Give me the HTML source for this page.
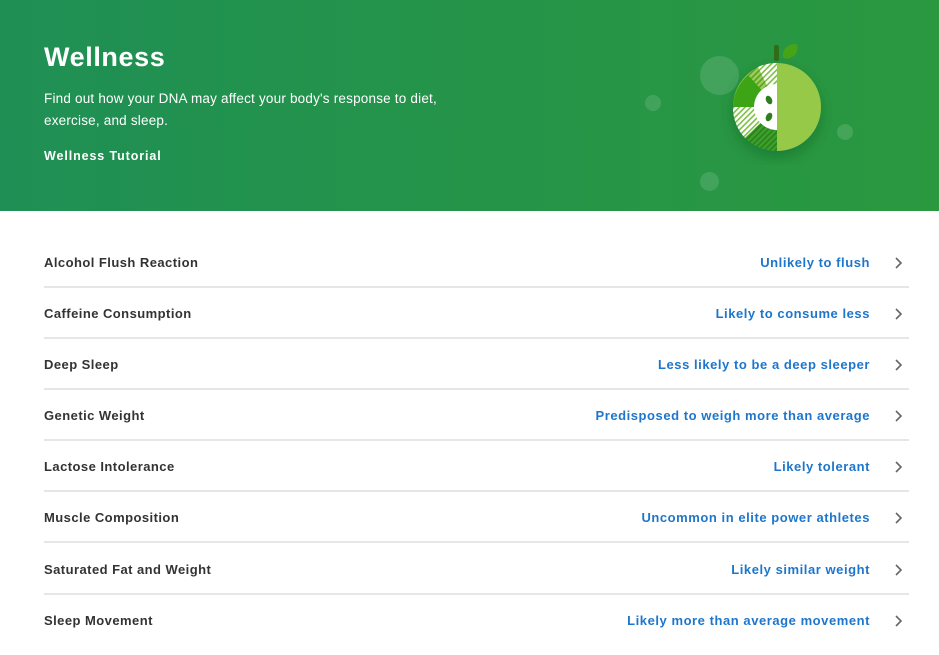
<!DOCTYPE html>
<html><head><meta charset="utf-8"><style>
*{margin:0;padding:0;box-sizing:border-box}
body{width:939px;height:655px;background:#fff;font-family:"Liberation Sans",Arial,sans-serif;overflow:hidden;position:relative}
.hdr{position:absolute;left:0;top:0;width:939px;height:211px;background:linear-gradient(90deg,#1f8f55 0%,#259449 50%,#2a983f 100%)}
h1{position:absolute;left:44px;top:42px;color:#fff;font-size:27px;font-weight:bold;letter-spacing:0.6px}
.desc{position:absolute;left:44px;top:88px;width:440px;color:#fff;font-size:13.5px;line-height:22px;letter-spacing:0.2px}
.tut{position:absolute;left:44px;top:149px;color:#fff;font-size:12.5px;font-weight:bold;letter-spacing:0.9px}
.circ{position:absolute;border-radius:50%;background:rgba(255,255,255,0.13)}
.row{position:absolute;left:44px;width:865px;height:51px;border-bottom:2px solid #e6e6e6}
.row .l{position:absolute;left:0;top:18px;font-size:13px;font-weight:bold;color:#333;letter-spacing:0.45px}
.row .r{position:absolute;right:39px;top:18px;font-size:13px;font-weight:bold;color:#1e76cc;letter-spacing:0.55px}
.row svg{position:absolute;right:6px;top:19px}
</style></head><body>
<div class="hdr">
<h1>Wellness</h1>
<div class="desc">Find out how your DNA may affect your body's response to diet, exercise, and sleep.</div>
<div class="tut">Wellness Tutorial</div>
<div class="circ" style="left:700px;top:56px;width:39px;height:39px"></div>
<div class="circ" style="left:645px;top:95px;width:16px;height:16px"></div>
<div class="circ" style="left:837px;top:124px;width:16px;height:16px"></div>
<div class="circ" style="left:700px;top:172px;width:19px;height:19px"></div>
<svg style="position:absolute;left:720px;top:35px" width="120" height="130" viewBox="0 0 120 130">
<defs>
<pattern id="h1" width="4" height="4" patternUnits="userSpaceOnUse" patternTransform="rotate(45)"><rect width="4" height="4" fill="#fff"/><rect width="1.6" height="4" fill="#7fbf45"/></pattern>
<pattern id="h2" width="4" height="4" patternUnits="userSpaceOnUse" patternTransform="rotate(45)"><rect width="4" height="4" fill="#3aa12a"/><rect width="1.6" height="4" fill="#2d7f1e"/></pattern>
<pattern id="h3" width="4" height="4" patternUnits="userSpaceOnUse" patternTransform="rotate(45)"><rect width="4" height="4" fill="#9ccf55"/><rect width="1.6" height="4" fill="#5a9f2a"/></pattern>
<filter id="sh" x="-50%" y="-50%" width="200%" height="200%"><feDropShadow dx="0" dy="6" stdDeviation="7" flood-color="#0a4a15" flood-opacity="0.35"/></filter>
</defs>
<rect x="54" y="10" width="5" height="16" rx="2" fill="#2f6e19"/>
<path d="M63 22 C62 14 68 9 76 9 C79 12 78 20 70 23 C67 24 64 24 63 22Z" fill="#45a516"/>
<g filter="url(#sh)"><circle cx="57" cy="72" r="44" fill="#97c94a"/></g>
<path d="M57 72 L57 28 A44 44 0 0 0 38 32 Z" fill="url(#h1)"/>
<path d="M57 72 L38 32 A44 44 0 0 0 28 40 Z" fill="url(#h3)"/>
<path d="M57 72 L28 40 A44 44 0 0 0 13 72 Z" fill="#3da416"/>
<path d="M57 72 L13 72 A44 44 0 0 0 25 103 Z" fill="url(#h1)"/>
<path d="M57 72 L25 103 A44 44 0 0 0 57 116 Z" fill="url(#h2)"/>
<path d="M57 49 A23 23 0 0 0 57 95 Z" fill="#fff"/>
<ellipse cx="49" cy="65" rx="3" ry="4.5" fill="#2d7f1e" transform="rotate(-25 49 65)"/>
<ellipse cx="49" cy="82" rx="3" ry="4.5" fill="#2d7f1e" transform="rotate(25 49 82)"/>
</svg>
</div>
<div class="row" style="top:237px"><span class="l">Alcohol Flush Reaction</span><span class="r">Unlikely to flush</span><svg width="9" height="14" viewBox="0 0 9 14"><path d="M2 2 L7 7 L2 12" stroke="#666" stroke-width="1.6" fill="none"/></svg></div>
<div class="row" style="top:288px"><span class="l">Caffeine Consumption</span><span class="r">Likely to consume less</span><svg width="9" height="14" viewBox="0 0 9 14"><path d="M2 2 L7 7 L2 12" stroke="#666" stroke-width="1.6" fill="none"/></svg></div>
<div class="row" style="top:339px"><span class="l">Deep Sleep</span><span class="r">Less likely to be a deep sleeper</span><svg width="9" height="14" viewBox="0 0 9 14"><path d="M2 2 L7 7 L2 12" stroke="#666" stroke-width="1.6" fill="none"/></svg></div>
<div class="row" style="top:390px"><span class="l">Genetic Weight</span><span class="r">Predisposed to weigh more than average</span><svg width="9" height="14" viewBox="0 0 9 14"><path d="M2 2 L7 7 L2 12" stroke="#666" stroke-width="1.6" fill="none"/></svg></div>
<div class="row" style="top:441px"><span class="l">Lactose Intolerance</span><span class="r">Likely tolerant</span><svg width="9" height="14" viewBox="0 0 9 14"><path d="M2 2 L7 7 L2 12" stroke="#666" stroke-width="1.6" fill="none"/></svg></div>
<div class="row" style="top:492px"><span class="l">Muscle Composition</span><span class="r">Uncommon in elite power athletes</span><svg width="9" height="14" viewBox="0 0 9 14"><path d="M2 2 L7 7 L2 12" stroke="#666" stroke-width="1.6" fill="none"/></svg></div>
<div class="row" style="top:544px"><span class="l">Saturated Fat and Weight</span><span class="r">Likely similar weight</span><svg width="9" height="14" viewBox="0 0 9 14"><path d="M2 2 L7 7 L2 12" stroke="#666" stroke-width="1.6" fill="none"/></svg></div>
<div class="row" style="top:595px;border-bottom:none"><span class="l">Sleep Movement</span><span class="r">Likely more than average movement</span><svg width="9" height="14" viewBox="0 0 9 14"><path d="M2 2 L7 7 L2 12" stroke="#666" stroke-width="1.6" fill="none"/></svg></div>
</body></html>
